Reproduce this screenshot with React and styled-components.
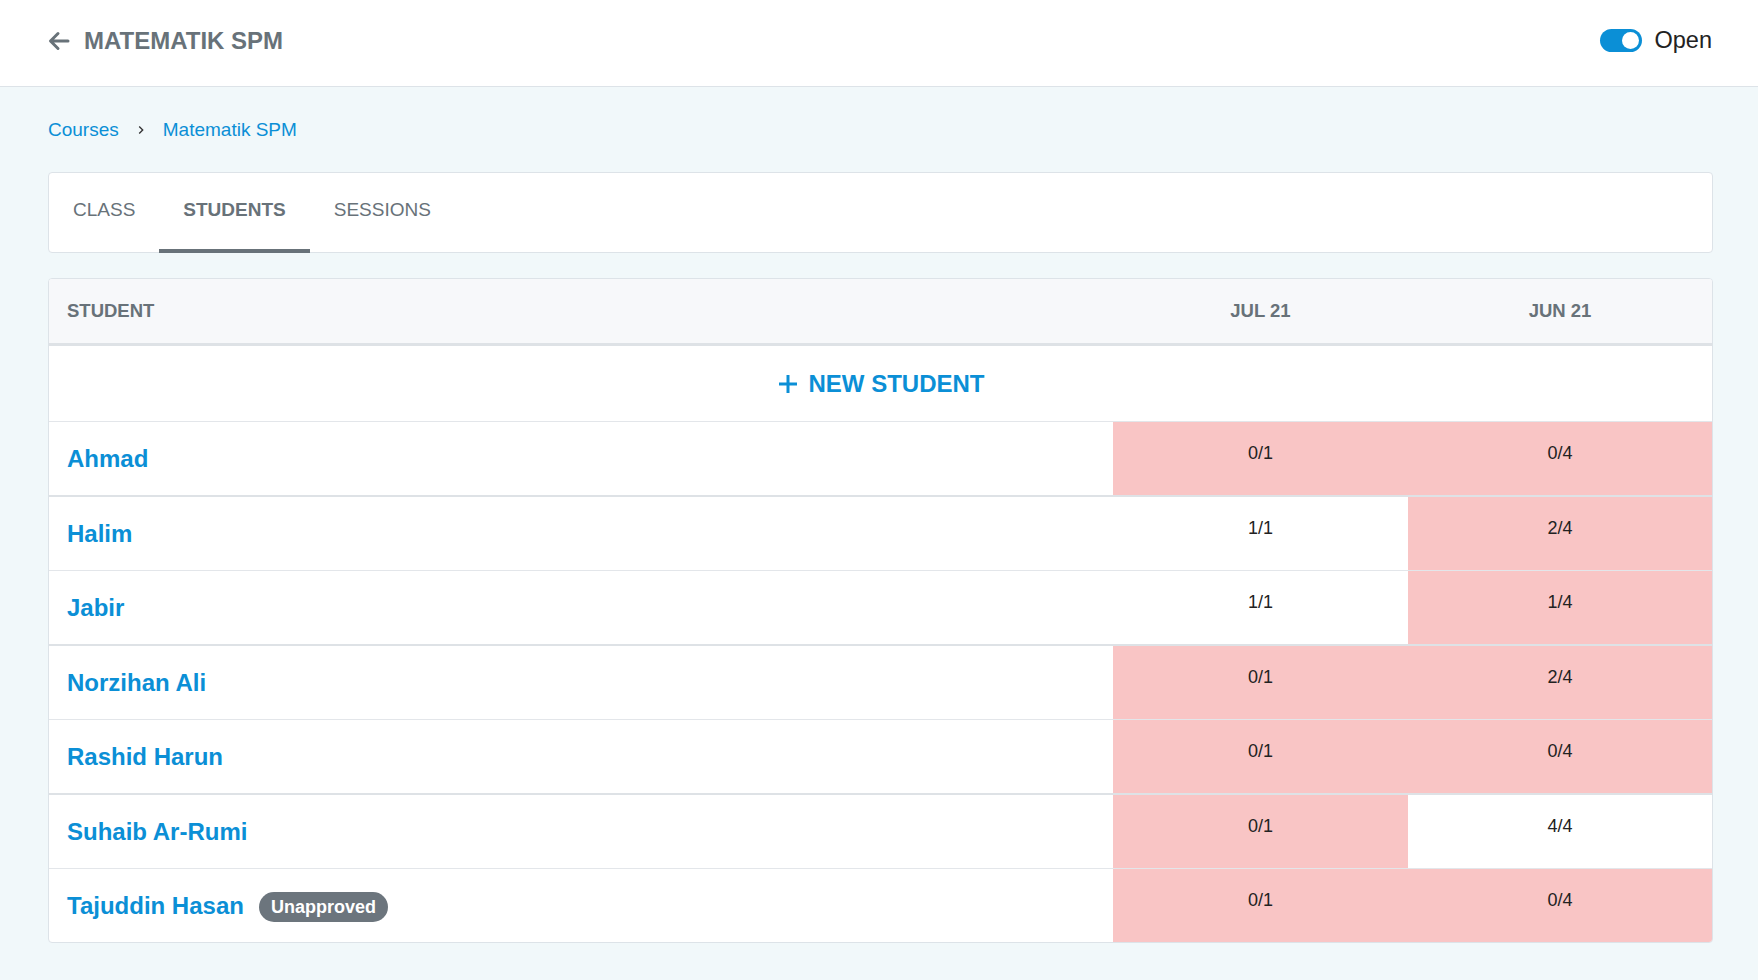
import React from 'react';
import styled, { createGlobalStyle } from 'styled-components';

const GlobalStyle = createGlobalStyle`
  html, body {
    margin: 0;
    padding: 0;
    background: #f1f8fa;
    font-family: "Liberation Sans", Arial, sans-serif;
  }
`;

const students = [
  { name: 'Ahmad', jul: '0/1', jun: '0/4', julBad: true, junBad: true, thick: true },
  { name: 'Halim', jul: '1/1', jun: '2/4', julBad: false, junBad: true },
  { name: 'Jabir', jul: '1/1', jun: '1/4', julBad: false, junBad: true, thick: true },
  { name: 'Norzihan Ali', jul: '0/1', jun: '2/4', julBad: true, junBad: true },
  { name: 'Rashid Harun', jul: '0/1', jun: '0/4', julBad: true, junBad: true, thick: true },
  { name: 'Suhaib Ar-Rumi', jul: '0/1', jun: '4/4', julBad: true, junBad: false },
  { name: 'Tajuddin Hasan', jul: '0/1', jun: '0/4', julBad: true, junBad: true, unapproved: true, last: true },
];

export default function App() {
  return (
    <>
      <GlobalStyle />
      <TopBar>
        <TitleWrap>
          <svg width="24" height="24" viewBox="0 0 24 24" fill="none" stroke="#687279" strokeWidth="3" strokeLinecap="round" strokeLinejoin="round">
            <path d="M21 12H4M11 4.5L3.5 12l7.5 7.5" />
          </svg>
          <Title>MATEMATIK SPM</Title>
        </TitleWrap>
        <ToggleWrap>
          <Toggle />
          <ToggleLabel>Open</ToggleLabel>
        </ToggleWrap>
      </TopBar>

      <Content>
        <Breadcrumb>
          <Crumb>Courses</Crumb>
          <svg width="16" height="16" viewBox="0 0 24 24" fill="#333">
            <path d="M10 6L8.59 7.41 13.17 12l-4.58 4.59L10 18l6-6z" />
          </svg>
          <Crumb>Matematik SPM</Crumb>
        </Breadcrumb>

        <TabCard>
          <Tab>CLASS</Tab>
          <Tab active>STUDENTS</Tab>
          <Tab>SESSIONS</Tab>
        </TabCard>

        <Table>
          <HeadRow>
            <HeadCell>STUDENT</HeadCell>
            <HeadCell center>JUL 21</HeadCell>
            <HeadCell center>JUN 21</HeadCell>
          </HeadRow>
          <NewRow>
            <NewButton>
              <svg width="22" height="22" viewBox="0 0 22 22" stroke="#0b8fd6" strokeWidth="3">
                <path d="M11 2v18M2 11h18" />
              </svg>
              NEW STUDENT
            </NewButton>
          </NewRow>
          {students.map((s) => (
            <Row key={s.name} thick={s.thick} last={s.last}>
              <NameCell>
                <Name>{s.name}</Name>
                {s.unapproved && <Badge>Unapproved</Badge>}
              </NameCell>
              <NumCell bad={s.julBad}>{s.jul}</NumCell>
              <NumCell bad={s.junBad}>{s.jun}</NumCell>
            </Row>
          ))}
        </Table>
      </Content>
    </>
  );
}

const TopBar = styled.header`
  height: 87px;
  background: #fff;
  border-bottom: 1px solid #dde3e8;
  display: flex;
  align-items: center;
  justify-content: space-between;
  padding: 0 46px 5px 47px;
  box-sizing: border-box;
`;

const TitleWrap = styled.div`
  display: flex;
  align-items: center;
  gap: 13px;
`;

const Title = styled.h1`
  margin: 0;
  font-size: 24px;
  font-weight: 700;
  color: #687279;
`;

const ToggleWrap = styled.div`
  display: flex;
  align-items: center;
  gap: 13px;
`;

const Toggle = styled.span`
  width: 42px;
  height: 23px;
  border-radius: 12px;
  background: #0b8fd6;
  position: relative;
  &::after {
    content: '';
    position: absolute;
    right: 3px;
    top: 3px;
    width: 17px;
    height: 17px;
    border-radius: 50%;
    background: #fff;
  }
`;

const ToggleLabel = styled.span`
  font-size: 23.5px;
  color: #222;
`;

const Content = styled.main`
  padding: 32px 45px 40px 48px;
`;

const Breadcrumb = styled.nav`
  display: flex;
  align-items: center;
  gap: 14px;
  height: 22px;
`;

const Crumb = styled.a`
  font-size: 19px;
  color: #0b8fd6;
`;

const TabCard = styled.div`
  margin-top: 31px;
  height: 79px;
  background: #fff;
  border: 1px solid #dde3e8;
  border-radius: 4px;
  display: flex;
`;

const Tab = styled.div`
  display: flex;
  align-items: center;
  padding: 0 24px 2px;
  font-size: 19px;
  color: #687279;
  font-weight: ${(p) => (p.active ? 700 : 400)};
  border-bottom: 4px solid ${(p) => (p.active ? '#687279' : 'transparent')};
  margin-bottom: -1px;
`;

const Table = styled.div`
  margin-top: 25px;
  background: #fff;
  border: 1px solid #dde3e8;
  border-radius: 4px;
  overflow: hidden;
`;

const HeadRow = styled.div`
  display: grid;
  grid-template-columns: 1fr 295px 304px;
  height: 64px;
  background: #f7f8fa;
  border-bottom: 3px solid #dee2e6;
`;

const HeadCell = styled.div`
  display: flex;
  align-items: center;
  justify-content: ${(p) => (p.center ? 'center' : 'flex-start')};
  padding: 0 18px 0;
  font-size: 18.5px;
  font-weight: 700;
  color: #687279;
`;

const NewRow = styled.div`
  height: 75px;
  border-bottom: 1px solid #e3e6ea;
  display: flex;
  align-items: center;
  justify-content: center;
`;

const NewButton = styled.button`
  display: flex;
  align-items: center;
  gap: 10px;
  background: none;
  border: 0;
  padding: 0;
  font-family: "Liberation Sans", Arial, sans-serif;
  font-size: 24px;
  font-weight: 700;
  color: #0b8fd6;
`;

const Row = styled.div`
  display: grid;
  grid-template-columns: 1fr 295px 304px;
  height: 73px;
  border-bottom: ${(p) => (p.last ? 'none' : p.thick ? '2px solid #dee2e6' : '1px solid #e3e6ea')};
`;

const NameCell = styled.div`
  display: flex;
  align-items: center;
  gap: 15px;
  padding: 0 18px;
`;

const Name = styled.a`
  font-size: 24px;
  font-weight: 700;
  color: #0b8fd6;
`;

const Badge = styled.span`
  display: inline-flex;
  align-items: center;
  height: 30px;
  padding: 0 12px;
  border-radius: 15px;
  background: #6c757d;
  color: #fff;
  font-size: 18px;
  font-weight: 700;
  margin-top: 3px;
`;

const NumCell = styled.div`
  background: ${(p) => (p.bad ? '#f9c5c5' : '#fff')};
  text-align: center;
  padding-top: 21px;
  font-size: 18px;
  color: #222;
`;
